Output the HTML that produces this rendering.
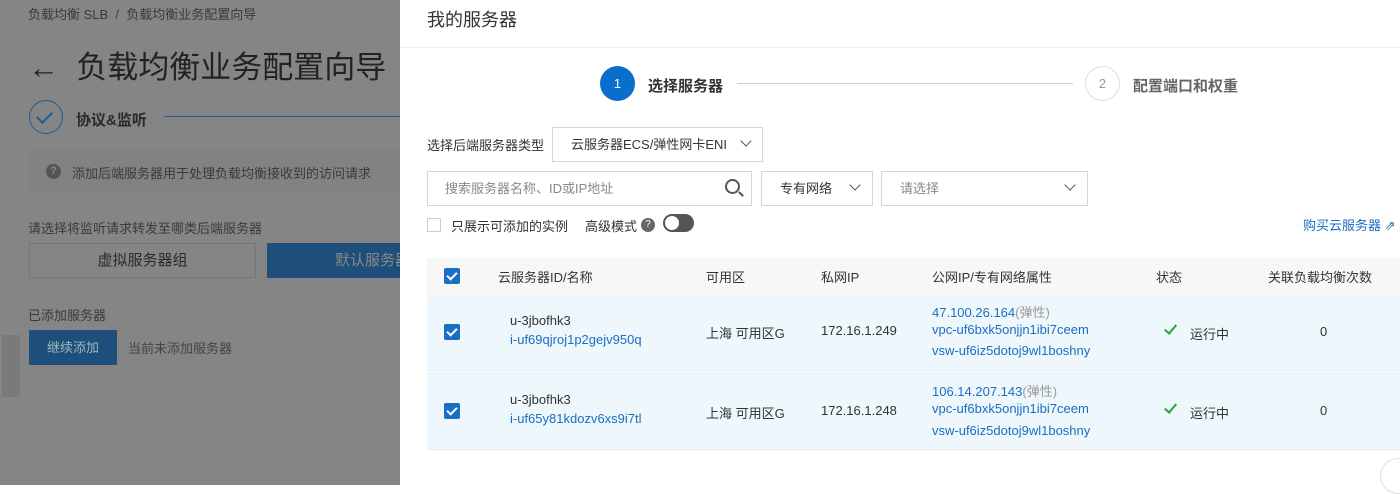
<!DOCTYPE html>
<html><head><meta charset="utf-8"><style>
*{margin:0;padding:0;box-sizing:border-box}
body{width:1400px;height:485px;overflow:hidden;font-family:"Liberation Sans","Noto Sans CJK SC",sans-serif;background:#fff;position:relative;color:#333}
.left{position:absolute;left:0;top:0;width:400px;height:485px;background:#858585;color:#2a2a2a}
.a{position:absolute;white-space:nowrap}
.p{position:absolute;left:400px;top:0;width:1000px;height:485px;background:#fff}
.blue{color:#1a6ec2}
.cb{position:absolute;width:16px;height:16px;background:#1a6fc4;border-radius:2px}
.cb:after{content:"";position:absolute;left:5px;top:2px;width:4px;height:8px;border:solid #fff;border-width:0 2px 2px 0;transform:rotate(45deg)}
.sel{position:absolute;border:1px solid #d6d6d6;height:35px;font-size:13px;line-height:33px;padding-left:12px}
.chev{position:absolute;width:8px;height:8px;border:solid #555;border-width:0 1.5px 1.5px 0;transform:rotate(45deg)}
.r{position:absolute;font-size:13px;white-space:nowrap}
.ck{position:absolute;width:7px;height:12px;border:solid #2aa53c;border-width:0 2px 2px 0;transform:rotate(40deg)}
</style></head><body>
<div class="left">
<div class="a" style="left:28px;top:4px;font-size:13px;color:#3a3a3a">负载均衡 SLB &nbsp;/&nbsp; 负载均衡业务配置向导</div>
<div class="a" style="left:28px;top:42px;font-size:31px;color:#222">←&nbsp; 负载均衡业务配置向导</div>
<div class="a" style="left:29px;top:100px;width:34px;height:34px;border:1.5px solid #1f5b94;border-radius:50%"></div>
<div class="a" style="left:40px;top:108px;width:9px;height:15px;border:solid #1f5b94;border-width:0 2px 2px 0;transform:rotate(45deg)"></div>
<div class="a" style="left:76px;top:109px;font-size:15px;font-weight:bold;color:#2a2a2a">协议&amp;监听</div>
<div class="a" style="left:164px;top:116px;width:236px;height:1px;background:#1f5b94"></div>
<div class="a" style="left:30px;top:150px;width:370px;height:42px;background:#828282"></div>
<div class="a" style="left:46px;top:164px;width:15px;height:15px;border-radius:50%;background:#555;color:#888;font-size:11px;text-align:center;line-height:15px;font-weight:bold">?</div>
<div class="a" style="left:72px;top:163px;font-size:13px;color:#3a3a3a">添加后端服务器用于处理负载均衡接收到的访问请求</div>
<div class="a" style="left:28px;top:218px;font-size:13px;color:#3a3a3a">请选择将监听请求转发至哪类后端服务器</div>
<div class="a" style="left:29px;top:243px;width:227px;height:35px;border:1px solid #777;text-align:center;line-height:33px;font-size:15px;color:#2a2a2a">虚拟服务器组</div>
<div class="a" style="left:267px;top:243px;width:133px;height:35px;background:#1e4f7a;line-height:35px;font-size:15px;color:#888;padding-left:68px;overflow:hidden">默认服务器</div>
<div class="a" style="left:28px;top:305px;font-size:13px;color:#3a3a3a">已添加服务器</div>
<div class="a" style="left:29px;top:330px;width:88px;height:35px;background:#1e4f7a;color:#9bb;text-align:center;line-height:35px;font-size:13px">继续添加</div>
<div class="a" style="left:128px;top:338px;font-size:13px;color:#444">当前未添加服务器</div>
<div class="a" style="left:2px;top:335px;width:18px;height:62px;background:#7a7a7a"></div>
</div>
<div class="p">
<div class="a" style="left:27px;top:6px;font-size:18px;color:#333">我的服务器</div>
<div class="a" style="left:0;top:47px;width:1000px;height:1px;background:#eee"></div>
<div class="a" style="left:200px;top:66px;width:35px;height:35px;border-radius:50%;background:#0a6fcc;color:#fff;text-align:center;line-height:35px;font-size:13px">1</div>
<div class="a" style="left:248px;top:75px;font-size:15px;font-weight:bold;color:#333">选择服务器</div>
<div class="a" style="left:337px;top:83px;width:336px;height:1px;background:#ccc"></div>
<div class="a" style="left:685px;top:66px;width:35px;height:35px;border-radius:50%;border:1px solid #ddd;color:#999;text-align:center;line-height:33px;font-size:13px">2</div>
<div class="a" style="left:733px;top:75px;font-size:15px;font-weight:bold;color:#666">配置端口和权重</div>
<div class="a" style="left:27px;top:135px;font-size:13px;color:#333">选择后端服务器类型</div>
<div class="sel" style="left:152px;top:127px;width:211px;padding-left:18px">云服务器ECS/弹性网卡ENI</div><div class="chev" style="left:342px;top:137px"></div>
<div class="sel" style="left:27px;top:171px;width:325px;color:#888;padding-left:17px">搜索服务器名称、ID或IP地址</div>
<div class="a" style="left:325px;top:179px;width:15px;height:15px;border:2px solid #555;border-radius:50%"></div>
<div class="a" style="left:338px;top:193px;width:6px;height:2px;background:#555;transform:rotate(45deg)"></div>
<div class="sel" style="left:361px;top:171px;width:112px;color:#333;padding-left:18px">专有网络</div><div class="chev" style="left:451px;top:181px"></div>
<div class="sel" style="left:481px;top:171px;width:207px;color:#888;padding-left:18px">请选择</div><div class="chev" style="left:666px;top:181px"></div>
<div class="a" style="left:27px;top:218px;width:14px;height:14px;border:1px solid #ccc"></div>
<div class="a" style="left:51px;top:216px;font-size:13px">只展示可添加的实例</div>
<div class="a" style="left:185px;top:216px;font-size:13px">高级模式</div>
<div class="a" style="left:241px;top:218px;width:14px;height:14px;border-radius:50%;background:#666;color:#fff;font-size:10px;text-align:center;line-height:14px">?</div>
<div class="a" style="left:263px;top:214px;width:31px;height:18px;border-radius:9px;background:#555"></div>
<div class="a" style="left:265px;top:216px;width:14px;height:14px;border-radius:50%;background:#fff"></div>
<div class="a blue" style="left:903px;top:215px;font-size:13px">购买云服务器 ⇗</div>
<div class="a" style="left:27px;top:258px;width:973px;height:35px;background:#f7f7f7"></div>
<div class="cb" style="left:44px;top:268px"></div>
<div class="r" style="left:98px;top:267px">云服务器ID/名称</div>
<div class="r" style="left:306px;top:267px">可用区</div>
<div class="r" style="left:421px;top:267px">私网IP</div>
<div class="r" style="left:532px;top:267px">公网IP/专有网络属性</div>
<div class="r" style="left:756px;top:267px">状态</div>
<div class="r" style="left:868px;top:267px">关联负载均衡次数</div>
<div class="a" style="left:27px;top:293px;width:973px;height:78px;background:#eef7fc;border-bottom:1px solid #e2ecf2"></div>
<div class="a" style="left:27px;top:372px;width:973px;height:78px;background:#eef7fc;border-bottom:1px solid #e2ecf2"></div>
<div class="cb" style="left:44px;top:324px"></div>
<div class="r" style="left:110px;top:313px">u-3jbofhk3</div>
<div class="r blue" style="left:110px;top:332px">i-uf69qjroj1p2gejv950q</div>
<div class="r" style="left:306px;top:323px">上海 可用区G</div>
<div class="r" style="left:421px;top:323px">172.16.1.249</div>
<div class="r blue" style="left:532px;top:302px">47.100.26.164<span style="color:#999">(弹性)</span></div>
<div class="r blue" style="left:532px;top:322px">vpc-uf6bxk5onjjn1ibi7ceem</div>
<div class="r blue" style="left:532px;top:343px">vsw-uf6iz5dotoj9wl1boshny</div>
<div class="ck" style="left:767px;top:322px"></div>
<div class="r" style="left:790px;top:324px">运行中</div>
<div class="r" style="left:920px;top:324px">0</div>
<div class="cb" style="left:44px;top:403px"></div>
<div class="r" style="left:110px;top:392px">u-3jbofhk3</div>
<div class="r blue" style="left:110px;top:411px">i-uf65y81kdozv6xs9i7tl</div>
<div class="r" style="left:306px;top:403px">上海 可用区G</div>
<div class="r" style="left:421px;top:403px">172.16.1.248</div>
<div class="r blue" style="left:532px;top:381px">106.14.207.143<span style="color:#999">(弹性)</span></div>
<div class="r blue" style="left:532px;top:401px">vpc-uf6bxk5onjjn1ibi7ceem</div>
<div class="r blue" style="left:532px;top:423px">vsw-uf6iz5dotoj9wl1boshny</div>
<div class="ck" style="left:767px;top:401px"></div>
<div class="r" style="left:790px;top:403px">运行中</div>
<div class="r" style="left:920px;top:403px">0</div>
<div class="a" style="left:980px;top:458px;width:36px;height:36px;border-radius:50%;border:1px solid #ddd;background:#fff"></div>
</div>
</body></html>
